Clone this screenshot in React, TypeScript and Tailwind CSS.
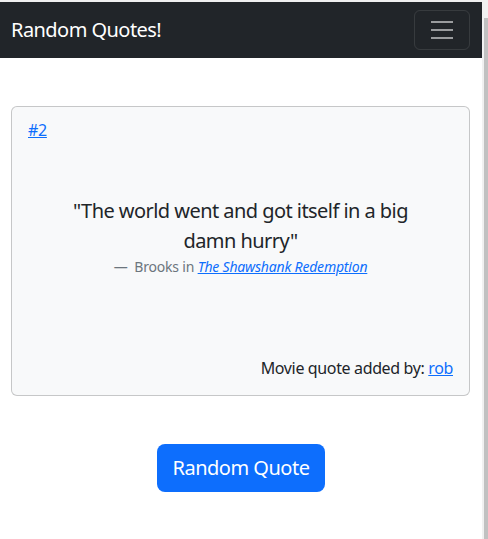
export default function App() {
  const font = { fontFamily: '"Noto Sans", "Open Sans", sans-serif' };

  return (
    <div className="flex min-h-[539px] w-full bg-white text-[#212529]" style={font}>
      <div className="flex min-w-0 flex-1 flex-col">
        <div className="h-[2px] bg-[#f0f0f0]"></div>

        {/* Navbar */}
        <nav className="flex h-[56px] items-center justify-between bg-[#212529] pl-[11px] pr-[12px]">
          <a className="text-[20px] leading-[30px] tracking-[-0.55px] text-white">Random Quotes!</a>
          <button className="flex h-[40px] w-[56px] items-center justify-center rounded-[6px] border border-white/10">
            <svg width="30" height="30" viewBox="0 0 30 30">
              <path d="M4 7h22M4 15h22M4 23h22" stroke="rgba(255,255,255,0.55)" strokeWidth="2" strokeLinecap="butt" />
            </svg>
          </button>
        </nav>

        {/* Quote card */}
        <div className="mx-[11px] mr-[12px] mt-[48px] h-[290px] rounded-[6px] border border-black/20 bg-[#f8f9fa] px-[16px] pb-[16px] pt-[11px]">
          <div className="text-[16px] leading-[24px] tracking-[-0.3px]">
            <a className="text-[#0d6efd] underline">#2</a>
          </div>

          <div className="mx-auto mt-[54px] max-w-[360px] text-center">
            <p className="text-[20px] leading-[30px] tracking-[-0.55px]">"The world went and got itself in a big damn hurry"</p>
            <p className="text-[14px] leading-[21px] tracking-[-0.2px] text-[#6c757d]">
              —&nbsp; Brooks in <a className="italic text-[#0d6efd] underline">The Shawshank Redemption</a>
            </p>
          </div>

          <div className="mt-[79px] text-right text-[16px] leading-[24px] tracking-[-0.36px]">
            Movie quote added by: <a className="text-[#0d6efd] underline">rob</a>
          </div>
        </div>

        <div className="mt-[48px] flex justify-center">
          <button className="h-[48px] rounded-[8px] bg-[#0d6efd] px-[16px] text-[20px] leading-[30px] tracking-[-0.5px] text-white">
            Random Quote
          </button>
        </div>
      </div>

      {/* Scrollbar */}
      <div className="flex w-[6px] flex-col bg-[#f1f1f1]">
        <div className="ml-[2px] mt-[18px] flex-1 bg-[#c1c1c1]"></div>
      </div>
    </div>
  );
}
